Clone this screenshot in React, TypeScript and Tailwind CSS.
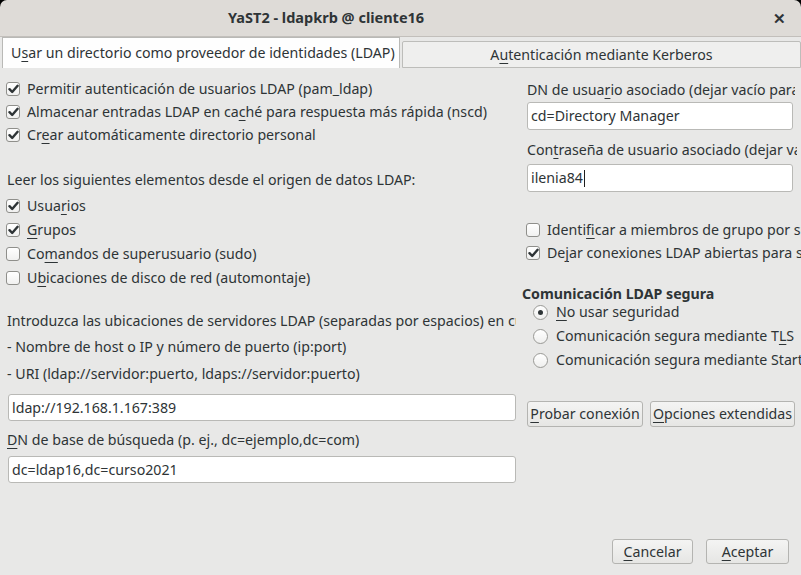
import React from "react";

const U = ({ c }: { c: string }) => <span className="underline decoration-[1px] underline-offset-[3px]">{c}</span>;

function Check({ checked }: { checked: boolean }) {
  return (
    <span className="flex h-[14px] w-[14px] shrink-0 items-center justify-center rounded-[3px] border border-[#8f8f8b] bg-gradient-to-b from-[#ffffff] to-[#f1f1f0]">
      {checked && (
        <svg width="11" height="10" viewBox="0 0 11 10">
          <path d="M1.5 5.2 L4.2 8 L9.6 1.8" fill="none" stroke="#2e3436" strokeWidth="2.4" strokeLinecap="round" strokeLinejoin="round" />
        </svg>
      )}
    </span>
  );
}

function Radio({ checked }: { checked: boolean }) {
  return (
    <span className="flex h-[15px] w-[15px] shrink-0 items-center justify-center rounded-full border border-[#9a9a96] bg-gradient-to-b from-[#ffffff] to-[#efefee]">
      {checked && <span className="h-[5px] w-[5px] rounded-full bg-[#2e3436]" />}
    </span>
  );
}

function CheckRow({ checked, children, h = "h-[23px]" }: { checked: boolean; children: React.ReactNode; h?: string }) {
  return (
    <div className={`flex ${h} items-center gap-[7px] whitespace-nowrap`}>
      <Check checked={checked} />
      <span>{children}</span>
    </div>
  );
}

function Input({ value, cursor }: { value: string; cursor?: boolean }) {
  return (
    <div className="flex h-full items-center rounded-[3px] border border-[#b9b9b6] bg-white pl-[3px] whitespace-nowrap">
      <span>{value}</span>
      {cursor && <span className="ml-[1px] h-[17px] w-[1px] bg-[#1e1e1e]" />}
    </div>
  );
}

function Btn({ children, w }: { children: React.ReactNode; w: string }) {
  return (
    <div className={`flex h-[26px] ${w} items-center justify-center rounded-[3px] border border-[#b4b4b1] bg-gradient-to-b from-[#f4f4f3] to-[#e6e6e4] whitespace-nowrap`}>
      {children}
    </div>
  );
}

export default function App() {
  return (
    <div
      className="h-[575px] w-[801px] overflow-hidden bg-black text-[14.2px] text-[#2e3436]"
      style={{ fontFamily: '"Noto Sans", "Open Sans", sans-serif' }}
    >
      {/* title bar */}
      <div className="flex h-[37px] items-center rounded-t-[7px] border-b border-[#c2bfbb] bg-[#dedbd7]">
        <div className="flex-1 pl-[228px] text-[14.5px] font-bold text-[#2e3436]">YaST2 - ldapkrb @ cliente16</div>
        <div className="pr-[15px] text-[15px] font-bold text-[#2e3436]">✕</div>
      </div>

      <div className="flex h-[538px] flex-col bg-[#e8e8e7]">
        {/* tabs */}
        <div className="flex h-[31px] items-end pl-[2px]">
          <div className="flex h-[31px] w-[398px] items-center border-x border-t border-[#b9b9b6] bg-[#fefefe] pl-[8px] whitespace-nowrap">
            U<U c="s" />ar un directorio como proveedor de identidades (LDAP)
          </div>
          <div className="ml-[2px] flex h-[27px] flex-1 items-center justify-center rounded-t-[2px] border border-[#bdbdba] bg-[#efefee] whitespace-nowrap">
            A<U c="u" />tenticación mediante Kerberos
          </div>
        </div>

        <div className="flex flex-1">
          {/* left column */}
          <div className="flex w-[516px] shrink-0 flex-col overflow-hidden pl-[6px]">
            <div className="mt-[9px]">
              <CheckRow checked>Permitir autenticación de usuarios LDAP (pam_ldap)</CheckRow>
              <CheckRow checked>
                Almacenar entradas LDAP en ca<U c="c" />hé para respuesta más rápida (nscd)
              </CheckRow>
              <CheckRow checked>
                Cr<U c="e" />ar automáticamente directorio personal
              </CheckRow>
            </div>
            <div className="mt-[22px] flex h-[23px] items-center pl-[1px] whitespace-nowrap">
              Leer los siguientes elementos desde el origen de datos LDAP:
            </div>
            <div className="mt-[3px]">
              <CheckRow checked h="h-[24px]">
                Usua<U c="r" />ios
              </CheckRow>
              <CheckRow checked h="h-[24px]">
                <U c="G" />rupos
              </CheckRow>
              <CheckRow checked={false} h="h-[24px]">
                Co<U c="m" />andos de superusuario (sudo)
              </CheckRow>
              <CheckRow checked={false} h="h-[24px]">
                U<U c="b" />icaciones de disco de red (automontaje)
              </CheckRow>
            </div>
            <div className="mt-[18px] flex flex-col pl-[1px] whitespace-nowrap">
              <div className="flex h-[26px] items-center">
                Introduzca las ubicaciones de servidores LDAP (separadas por espacios) en cu
              </div>
              <div className="flex h-[26px] items-center">- Nombre de host o IP y número de puerto (ip:port)</div>
              <div className="flex h-[27px] items-center">- URI (ldap://servidor:puerto, ldaps://servidor:puerto)</div>
            </div>
            <div className="mt-[7px] h-[27px] pl-[2px]">
              <Input value="ldap://192.168.1.167:389" />
            </div>
            <div className="mt-[7px] flex h-[24px] items-center pl-[1px] whitespace-nowrap">
              <U c="D" />N de base de búsqueda (p. ej., dc=ejemplo,dc=com)
            </div>
            <div className="mt-[4px] h-[27px] pl-[2px]">
              <Input value="dc=ldap16,dc=curso2021" />
            </div>
          </div>

          {/* right column */}
          <div className="flex flex-1 flex-col overflow-hidden pl-[6px]">
            <div className="mt-[10px] flex h-[24px] w-[273px] items-center overflow-hidden pl-[5px] whitespace-nowrap">
              DN de usua<U c="r" />io asociado (dejar vacío para
            </div>
            <div className="h-[28px] w-[271px] pl-[5px]">
              <Input value="cd=Directory Manager" />
            </div>
            <div className="mt-[8px] flex h-[24px] w-[275px] items-center overflow-hidden pl-[5px] whitespace-nowrap">
              Con<U c="t" />raseña de usuario asociado (dejar va
            </div>
            <div className="mt-[2px] h-[28px] w-[271px] pl-[5px]">
              <Input value="ilenia84" cursor />
            </div>
            <div className="mt-[26px] pl-[4px]">
              <CheckRow checked={false}>
                Identi<U c="f" />icar a miembros de grupo por su
              </CheckRow>
              <CheckRow checked>
                De<U c="j" />ar conexiones LDAP abiertas para s
              </CheckRow>
            </div>
            <div className="mt-[22px] flex h-[16px] items-center whitespace-nowrap font-bold">Comunicación LDAP segura</div>
            <div className="-mt-[2px] flex flex-col pl-[11px]">
              {[
                { c: true, t: <><U c="N" />o usar seguridad</> },
                { c: false, t: <>Comunicación segura mediante T<U c="L" />S</> },
                { c: false, t: <>Comunicación segura mediante Start</> },
              ].map((r, i) => (
                <div key={i} className="flex h-[24px] items-center gap-[8px] whitespace-nowrap">
                  <Radio checked={r.c} />
                  <span>{r.t}</span>
                </div>
              ))}
            </div>
            <div className="mt-[29px] flex gap-[7px] pl-[5px]">
              <Btn w="w-[116px]">
                <U c="P" />robar conexión
              </Btn>
              <Btn w="w-[145px]">
                <U c="O" />pciones extendidas
              </Btn>
            </div>
          </div>
        </div>

        {/* bottom buttons */}
        <div className="flex justify-end gap-[13px] pb-[11px] pr-[12px]">
          <div className="flex h-[25px] w-[81px] items-center justify-center rounded-[3px] border border-[#b4b4b1] bg-gradient-to-b from-[#f4f4f3] to-[#e6e6e4]">
            <U c="C" />ancelar
          </div>
          <div className="flex h-[25px] w-[83px] items-center justify-center rounded-[3px] border border-[#b4b4b1] bg-gradient-to-b from-[#f4f4f3] to-[#e6e6e4]">
            <U c="A" />ceptar
          </div>
        </div>
      </div>
    </div>
  );
}
